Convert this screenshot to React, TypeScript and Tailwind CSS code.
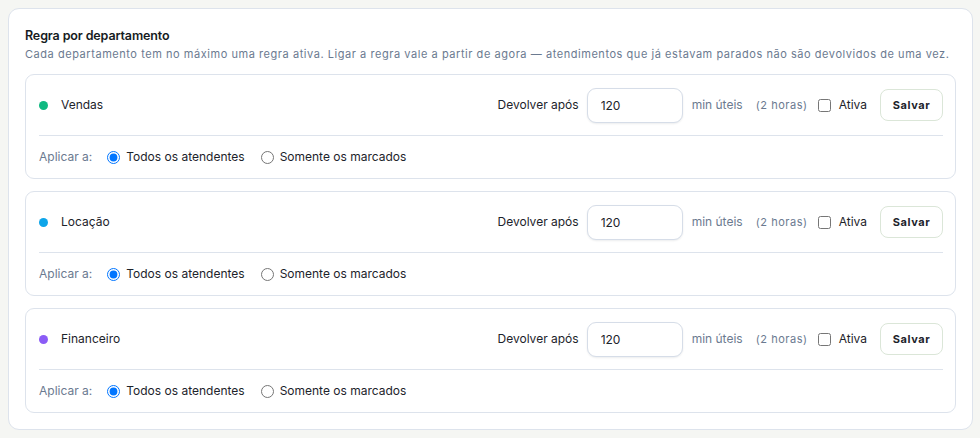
import React from "react";

const depts = [
  { name: "Vendas", color: "bg-[#10b981]" },
  { name: "Locação", color: "bg-[#0ea5e9]" },
  { name: "Financeiro", color: "bg-[#8b5cf6]" },
];

function DeptCard({ name, color, idx }: { name: string; color: string; idx: number }) {
  return (
    <div className="rounded-[9px] border border-[#dde3ec] bg-white">
      <div className="flex items-center h-[60px] pl-[13px] pr-[12px]">
        <span className={`w-[9px] h-[9px] rounded-full ${color}`} />
        <span className="ml-[13px] text-[12px] text-[#1d232b]">{name}</span>
        <div className="ml-auto flex items-center">
          <span className="text-[12px] text-[#1d232b]">Devolver após</span>
          <input
            type="text"
            defaultValue="120"
            className="ml-[8px] w-[96px] h-[35px] rounded-[9px] border border-[#d6dde8] bg-white pl-[13px] text-[12px] text-[#1d232b] shadow-[0_1px_2px_rgba(15,23,42,0.08)] outline-none"
          />
          <span className="ml-[9px] text-[12px] text-[#6b7a90]">min úteis</span>
          <span className="ml-[13px] text-[11px] tracking-[0.05em] text-[#6b7a90]">(2 horas)</span>
          <label className="ml-[10px] flex items-center">
            <input type="checkbox" name={`ativa-${idx}`} className="w-[13px] h-[13px] m-0" />
            <span className="ml-[8px] text-[12px] text-[#1d232b]">Ativa</span>
          </label>
          <button className="ml-[13px] w-[63px] h-[32px] rounded-[8px] border border-[#dbe6d8] bg-white text-[11px] font-bold tracking-[0.05em] text-[#1d232b]">
            Salvar
          </button>
        </div>
      </div>
      <div className="ml-[13px] mr-[12px] border-t border-[#dde3ec]" />
      <div className="flex items-center h-[42px] px-[13px]">
        <span className="text-[12px] text-[#6b7a90]">Aplicar a:</span>
        <label className="ml-[15px] flex items-center">
          <input type="radio" name={`aplicar-${idx}`} defaultChecked className="w-[13px] h-[13px] m-0" />
          <span className="ml-[6px] text-[12px] text-[#1d232b]">Todos os atendentes</span>
        </label>
        <label className="ml-[16px] flex items-center">
          <input type="radio" name={`aplicar-${idx}`} className="w-[13px] h-[13px] m-0" />
          <span className="ml-[6px] text-[12px] text-[#1d232b]">Somente os marcados</span>
        </label>
      </div>
    </div>
  );
}

export default function App() {
  return (
    <div
      className="w-[980px] h-[438px] bg-[#f5f6f3] pt-[8px] pl-[8px]"
      style={{ fontFamily: "Inter, 'Noto Sans', sans-serif" }}
    >
      <div className="w-[965px] h-[422px] rounded-[11px] border border-[#dde3ec] bg-white px-[16px] pt-[17px]">
        <h2 className="text-[12.5px] font-semibold text-[#161b22] leading-[20px] tracking-[-0.01em]">
          Regra por departamento
        </h2>
        <p className="mt-[0px] text-[11px] leading-[16px] tracking-[0.05em] text-[#6b7a90]">
          Cada departamento tem no máximo uma regra ativa. Ligar a regra vale a partir de agora — atendimentos que já estavam parados não são devolvidos de uma vez.
        </p>
        <div className="mt-[12px] flex flex-col gap-[12px]">
          {depts.map((d, i) => (
            <DeptCard key={d.name} name={d.name} color={d.color} idx={i} />
          ))}
        </div>
      </div>
    </div>
  );
}
